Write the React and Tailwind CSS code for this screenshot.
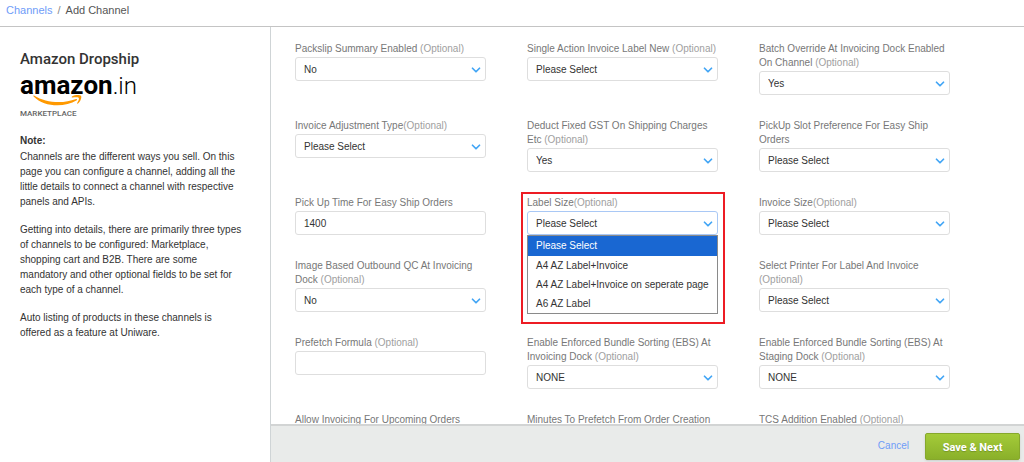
import React, { useState } from 'react'
import { ChevronDown } from 'lucide-react'

const fields = [
  { id: 'packslip', label: 'Packslip Summary Enabled ', optional: true, value: 'No', options: ['No', 'Yes'] },
  { id: 'singleAction', label: 'Single Action Invoice Label New ', optional: true, value: 'Please Select', options: ['Please Select'] },
  { id: 'batchOverride', label: 'Batch Override At Invoicing Dock Enabled On Channel ', optional: true, value: 'Yes', options: ['Yes', 'No'] },
  { id: 'invoiceAdjustment', label: 'Invoice Adjustment Type', optional: true, value: 'Please Select', options: ['Please Select'] },
  { id: 'deductGst', label: 'Deduct Fixed GST On Shipping Charges Etc ', optional: true, value: 'Yes', options: ['Yes', 'No'] },
  { id: 'pickupSlot', label: 'PickUp Slot Preference For Easy Ship Orders', value: 'Please Select', options: ['Please Select'] },
  { id: 'pickupTime', label: 'Pick Up Time For Easy Ship Orders', value: '1400' },
  {
    id: 'labelSize',
    label: 'Label Size',
    optional: true,
    open: true,
    value: 'Please Select',
    options: ['Please Select', 'A4 AZ Label+Invoice', 'A4 AZ Label+Invoice on seperate page', 'A6 AZ Label'],
  },
  { id: 'invoiceSize', label: 'Invoice Size', optional: true, value: 'Please Select', options: ['Please Select'] },
  { id: 'outboundQc', label: 'Image Based Outbound QC At Invoicing Dock ', optional: true, value: 'No', options: ['No', 'Yes'] },
  null,
  { id: 'printer', label: 'Select Printer For Label And Invoice ', optional: true, value: 'Please Select', options: ['Please Select'] },
  { id: 'prefetchFormula', label: 'Prefetch Formula ', optional: true, value: '' },
  { id: 'ebsInvoicing', label: 'Enable Enforced Bundle Sorting (EBS) At Invoicing Dock ', optional: true, value: 'NONE', options: ['NONE'] },
  { id: 'ebsStaging', label: 'Enable Enforced Bundle Sorting (EBS) At Staging Dock ', optional: true, value: 'NONE', options: ['NONE'] },
  { id: 'upcomingOrders', label: 'Allow Invoicing For Upcoming Orders', value: 'No', options: ['No', 'Yes'] },
  { id: 'prefetchMinutes', label: 'Minutes To Prefetch From Order Creation', value: '' },
  { id: 'tcs', label: 'TCS Addition Enabled ', optional: true, value: 'No', options: ['No', 'Yes'] },
]

function Field({ field }) {
  const [value, setValue] = useState(field.value)
  const [open, setOpen] = useState(Boolean(field.open))

  return (
    <div className="relative">
      <label htmlFor={field.id} className="block mb-[1px] text-[10px] leading-[14px] text-[#777]">
        {field.label}
        {field.optional && <span className="text-[#a0a0a0]">(Optional)</span>}
      </label>

      {field.options ? (
        <div className="relative">
          <select
            id={field.id}
            value={value}
            onChange={(e) => setValue(e.target.value)}
            className={
              field.open
                ? 'block w-full h-[24px] px-[8px] appearance-none rounded-[3px] border border-[#a9c8f5] bg-white text-[10px] text-[#333] outline-none'
                : 'block w-full h-[24px] px-[8px] appearance-none rounded-[3px] border border-[#dedede] bg-white text-[10px] text-[#333] outline-none'
            }
          >
            {field.options.map((option) => (
              <option key={option}>{option}</option>
            ))}
          </select>
          <ChevronDown
            size={14}
            strokeWidth={3}
            className="absolute right-[3px] top-[6px] text-[#42a5f5] pointer-events-none"
          />
          {open && (
            <ul
              role="listbox"
              className="absolute z-10 left-0 right-0 top-full border border-[#8a8a8a] bg-white text-[10px] leading-[19px] text-[#333]"
            >
              {field.options.map((option) => (
                <li
                  key={option}
                  role="option"
                  aria-selected={option === value}
                  onClick={() => {
                    setValue(option)
                    setOpen(false)
                  }}
                  className="px-[8px] cursor-default aria-selected:pb-[1px] aria-selected:bg-[#1967d2] aria-selected:text-white"
                >
                  {option}
                </li>
              ))}
            </ul>
          )}
        </div>
      ) : (
        <input
          id={field.id}
          type="text"
          value={value}
          onChange={(e) => setValue(e.target.value)}
          className="block w-full h-[24px] px-[8px] rounded-[3px] border border-[#dedede] bg-white text-[10px] text-[#333] outline-none"
        />
      )}

      {/* Highlight around the open field */}
      {field.open && (
        <div className="absolute -left-[6px] -right-[7px] -top-[4px] h-[132px] border-2 border-[#ed1c24] pointer-events-none" />
      )}
    </div>
  )
}

function AmazonLogo() {
  return (
    <svg width="124" height="38" viewBox="0 0 124 38" role="img" aria-label="amazon.in">
      <text x="0" y="25" fontSize="26" fill="#000" fontFamily="Roboto, sans-serif">
        <tspan fontWeight="700">amazon</tspan>
        <tspan fontWeight="300" fontSize="24">.in</tspan>
      </text>
      <path d="M14 26.5 C26 34 43 35 56 30 C57 29.8 57.6 30.6 56.8 31.2 C44 39 24 38 13.6 27.4 C13 26.6 13.4 26.2 14 26.5 Z" fill="#ff9900" />
      <path d="M52 27.4 C55 25.6 60 25.6 61 26.8 C62 28.4 60.4 32.6 58 34.6 C57.4 35 56.8 34.8 57.2 34 C58.2 32 59.4 29.8 58.8 28.9 C58 28 55 28.2 52.6 28.4 C51.6 28.4 51.4 27.8 52 27.4 Z" fill="#ff9900" />
    </svg>
  )
}

export default function App() {
  return (
    <div className="h-screen flex flex-col overflow-hidden bg-white font-['Liberation_Sans',Arial,sans-serif]">
      <header className="shrink-0 h-[27px] px-[6px] border-b border-[#c4c4c4] text-[11px] leading-[20px] text-[#555]">
        <a href="#channels" className="text-[#6f9cf8]">
          Channels
        </a>
        <span className="px-[5px] text-[#888]">/</span>
        <span>Add Channel</span>
      </header>

      <div className="flex-1 min-h-0 flex">
        <aside className="shrink-0 w-[271px] pl-[20px] pr-[26px] pt-[22px] border-r border-[#cfd4d6] text-[10px] text-[#333]">
          <h1 className="font-[Roboto] text-[15px] leading-[20px] font-medium">Amazon Dropship</h1>
          <AmazonLogo />
          <p className="mt-[1px] font-[Roboto] text-[8px] leading-[12px] font-medium text-[#666]">MARKETPLACE</p>
          <h2 className="mt-[13px] leading-[15px] font-bold">Note:</h2>
          <div className="flex flex-col gap-[13px] mt-[1px] leading-[15px]">
            <p>
              Channels are the different ways you sell. On this page you can configure a channel, adding all the
              little details to connect a channel with respective panels and APIs.
            </p>
            <p>
              Getting into details, there are primarily three types of channels to be configured: Marketplace,
              shopping cart and B2B. There are some mandatory and other optional fields to be set for each type of a
              channel.
            </p>
            <p>Auto listing of products in these channels is offered as a feature at Uniware.</p>
          </div>
        </aside>

        <main className="flex-1 min-w-0 flex flex-col">
          <form id="channelForm" className="flex-1 min-h-0 overflow-hidden pt-[15px] pl-[24px] pr-[74px]">
            <div className="grid grid-cols-3 gap-x-[41px] gap-y-[24px]">
              {fields.map((field, i) => (field ? <Field key={field.id} field={field} /> : <div key={i} />))}
            </div>
          </form>

          <footer className="shrink-0 flex items-start justify-end gap-[16px] h-[38px] pr-[4px] pt-[7px] border-t-2 border-[#d2d4d4] bg-[#e9ebea]">
            <button type="button" className="text-[10px] leading-[25px] text-[#6f9cf8]">
              Cancel
            </button>
            <button
              type="submit"
              form="channelForm"
              className="w-[95px] h-[27px] pt-[3px] rounded-[2px] border border-[#86a82c] bg-gradient-to-b from-[#a4cb39] to-[#8ab02a] font-[Roboto] text-[11px] font-bold text-white shadow-sm text-shadow-xs"
            >
              Save &amp; Next
            </button>
          </footer>
        </main>
      </div>
    </div>
  )
}
